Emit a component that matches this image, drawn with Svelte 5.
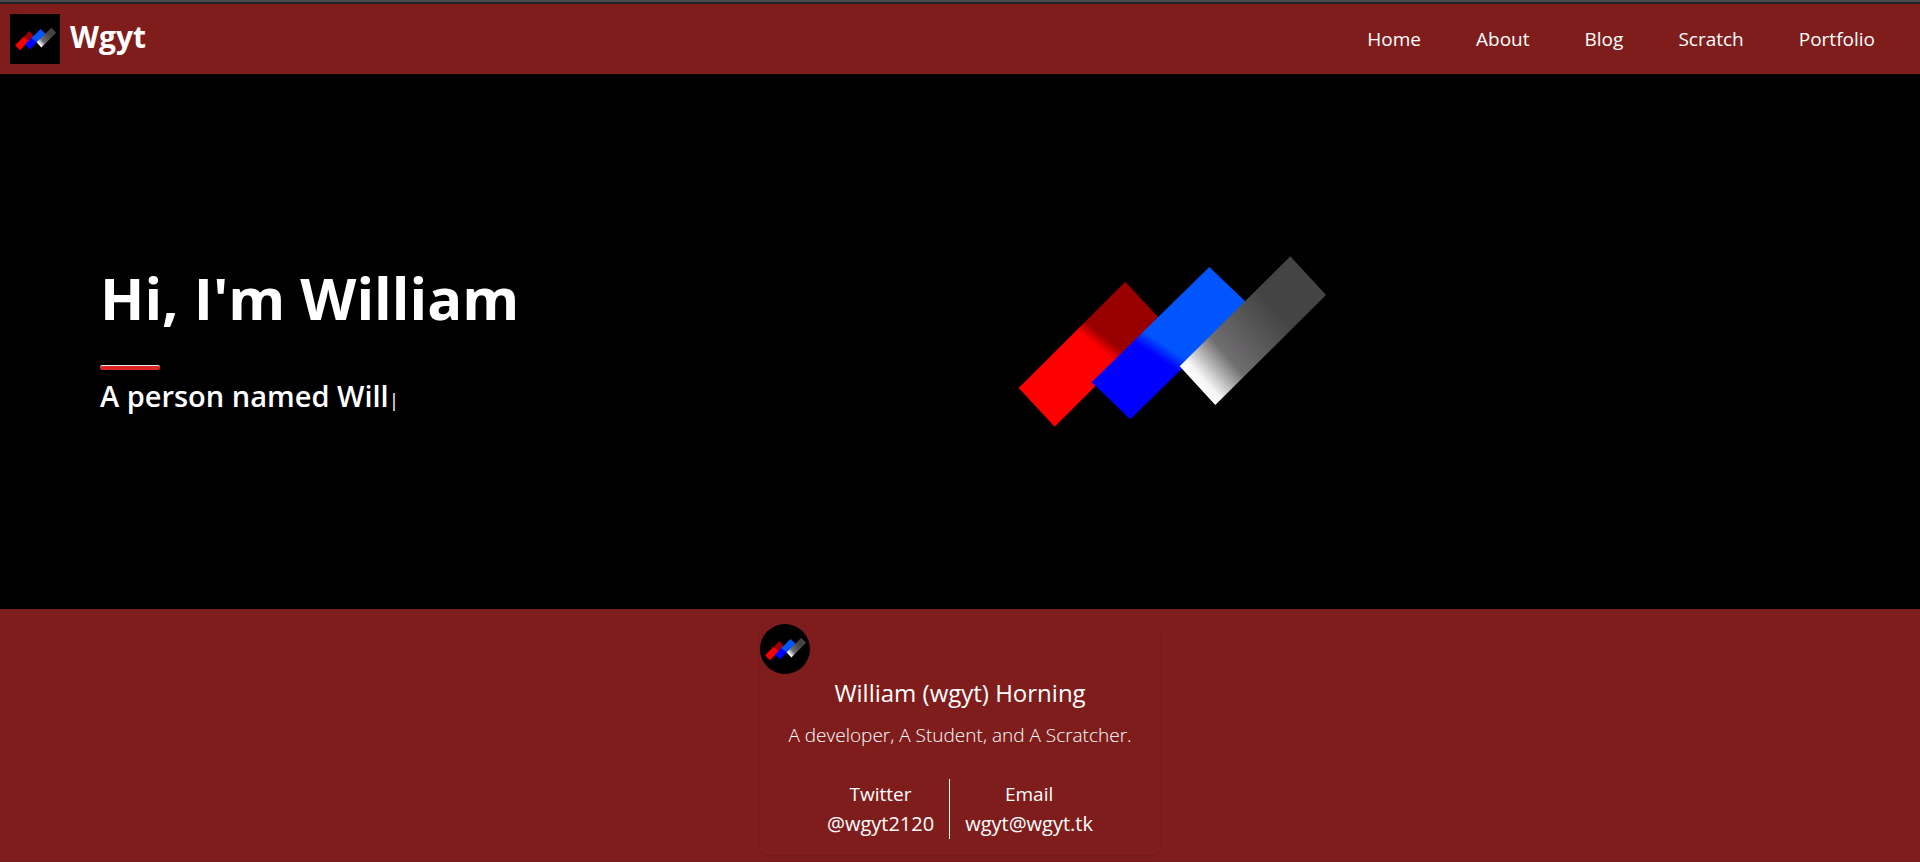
<script>
  const links = ['Home', 'About', 'Blog', 'Scratch', 'Portfolio'];
  const contacts = [
    { label: 'Twitter', value: '@wgyt2120' },
    { label: 'Email', value: 'wgyt@wgyt.tk' }
  ];
</script>

{#snippet logo(id)}
  <svg viewBox="0 0 375 375" aria-hidden="true">
    <defs>
      <linearGradient id="{id}-red" gradientUnits="userSpaceOnUse" x1="115" y1="191" x2="123" y2="181">
        <stop offset="0" stop-color="#ff0000" />
        <stop offset="1" stop-color="#990000" />
      </linearGradient>
      <linearGradient id="{id}-blue" gradientUnits="userSpaceOnUse" x1="177" y1="203" x2="185" y2="191">
        <stop offset="0" stop-color="#0000ff" />
        <stop offset="1" stop-color="#0055ff" />
      </linearGradient>
      <linearGradient id="{id}-gray" gradientUnits="userSpaceOnUse" x1="218" y1="232" x2="300" y2="160">
        <stop offset="0" stop-color="#ffffff" />
        <stop offset="0.08" stop-color="#f6f4f6" />
        <stop offset="0.38" stop-color="#706f70" />
        <stop offset="0.52" stop-color="#666466" />
        <stop offset="1" stop-color="#444444" />
      </linearGradient>
    </defs>
    <rect width="375" height="375" fill="#000" />
    <polygon points="145.3,127.7 181.3,166.4 74.7,272.7 38.7,234" fill="url(#{id}-red)" />
    <polygon points="229.3,113 268,150 150.3,265.3 111.7,228.3" fill="url(#{id}-blue)" />
    <polygon points="310.3,102.3 346,141 235.3,251 199.7,212.3" fill="url(#{id}-gray)" />
  </svg>
{/snippet}

<div class="page">
  <header>
    <a class="brand" href="#home">
      <span class="mark">{@render logo('nav')}</span>
      <span class="name">Wgyt</span>
    </a>
    <nav>
      {#each links as link}
        <a href="#{link.toLowerCase()}">{link}</a>
      {/each}
    </nav>
  </header>

  <main>
    <section class="intro">
      <h1>Hi, I'm William</h1>
      <hr />
      <p>A person named Will<span class="caret">|</span></p>
    </section>
    <div class="art">{@render logo('hero')}</div>
  </main>

  <footer>
    <div class="card">
      <span class="mark round">{@render logo('card')}</span>
      <h2>William (wgyt) Horning</h2>
      <p class="bio">A developer, A Student, and A Scratcher.</p>
      <dl>
        {#each contacts as contact}
          <div>
            <dt>{contact.label}</dt>
            <dd>{contact.value}</dd>
          </div>
        {/each}
      </dl>
    </div>
  </footer>
</div>

<style>
  :global(body) {
    margin: 0;
    background: #7f1d1d;
  }

  .page {
    display: flex;
    flex-direction: column;
    min-height: 100vh;
    box-sizing: border-box;
    border-top: 2px solid #4a4a4a;
    color: #fff;
    font-family: 'Segoe UI', 'Open Sans', 'Noto Sans', sans-serif;
    font-size: 19px;
    line-height: 30px;
  }

  h1, h2, p, dl, dd, hr {
    margin: 0;
  }

  svg {
    display: block;
    width: 100%;
    height: 100%;
  }

  a {
    color: inherit;
    text-decoration: none;
  }

  header {
    display: flex;
    justify-content: space-between;
    align-items: center;
    padding: 10px 45px 10px 10px;
    border-top: 2px solid #202124;
    background: #7f1d1d;
  }

  .brand {
    display: flex;
    gap: 10px;
  }

  .mark {
    display: block;
    width: 50px;
    height: 50px;
    overflow: hidden;
  }

  .round {
    border-radius: 50%;
  }

  .name {
    font-size: 30px;
    font-weight: 700;
    line-height: 45px;
  }

  nav {
    display: flex;
    gap: 55px;
  }

  main {
    display: grid;
    grid-template-columns: 1fr 1fr;
    align-items: center;
    flex: 1;
    background: #000;
  }

  .intro {
    padding: 0 0 7px 100px;
  }

  h1 {
    font-size: 58px;
    font-weight: 700;
    line-height: 70px;
  }

  hr {
    width: 60px;
    height: 4px;
    margin: 32px 0 8px;
    border: 0;
    border-top: 1px solid #e5e7eb;
    border-radius: 2px;
    background: #dc2626;
  }

  .intro p {
    font-size: 29px;
    font-weight: 600;
    line-height: 35px;
  }

  .caret {
    font-size: 19px;
    font-weight: 400;
    line-height: 1;
  }

  .art {
    width: 375px;
    height: 375px;
    margin-left: 20px;
  }

  footer {
    display: flex;
    justify-content: center;
    padding: 15px 0 6px;
    border-bottom: 1px solid #701a1a;
    background: #7f1d1d;
  }

  .card {
    width: 400px;
    padding-bottom: 16px;
    border-radius: 8px;
    box-shadow: 0 1px 3px rgba(0, 0, 0, 0.15);
    text-align: center;
  }

  h2 {
    font-size: 24px;
    font-weight: 400;
    line-height: 38px;
  }

  .bio {
    padding: 8px 0 29px;
    font-weight: 300;
  }

  dl {
    display: flex;
    justify-content: center;
  }

  dl div {
    padding: 0 15px;
  }

  dl div + div {
    border-left: 1px solid #fff;
  }

  dd {
    font-size: 20px;
  }
</style>
